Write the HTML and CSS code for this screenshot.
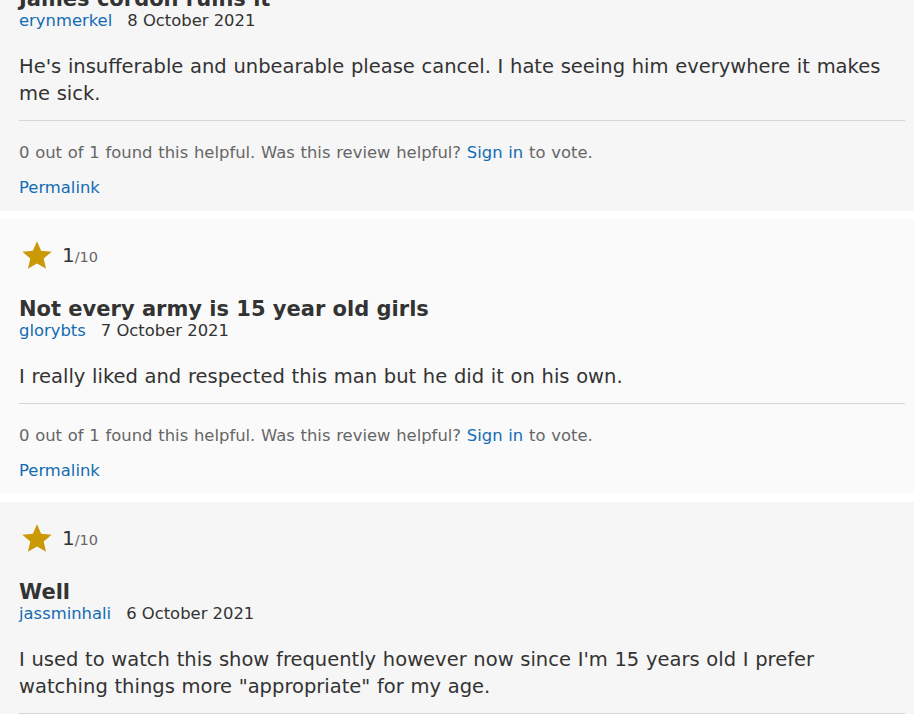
FILE: index.html
```html
<!DOCTYPE html>
<html lang="en">
<head>
<meta charset="utf-8">
<title>User reviews</title>
<link rel="stylesheet" href="styles.css">
</head>
<body>
<div class="list">
  <div class="review review--odd">
    <div class="rating">
      <svg class="star" viewBox="0 0 24 24" aria-hidden="true"><path d="M12 1.6l3.1 7.3 7.9.6-6 5.2 1.8 7.7L12 18.3l-6.8 4.1 1.8-7.7-6-5.2 7.9-.6z"/></svg>
      <span class="score">1</span><span class="outof">/10</span>
    </div>
    <div class="title">James cordon ruins it</div>
    <div class="meta"><a class="author" href="#">erynmerkel</a><span class="date">8 October 2021</span></div>
    <div class="text">He's insufferable and unbearable please cancel. I hate seeing him everywhere it makes me sick.</div>
    <div class="actions">
      <div class="helpful">0 out of 1 found this helpful. Was this review helpful? <a href="#">Sign in</a> to vote.</div>
      <a class="permalink" href="#">Permalink</a>
    </div>
  </div>
  <div class="review review--even">
    <div class="rating">
      <svg class="star" viewBox="0 0 24 24" aria-hidden="true"><path d="M12 1.6l3.1 7.3 7.9.6-6 5.2 1.8 7.7L12 18.3l-6.8 4.1 1.8-7.7-6-5.2 7.9-.6z"/></svg>
      <span class="score">1</span><span class="outof">/10</span>
    </div>
    <div class="title">Not every army is 15 year old girls</div>
    <div class="meta"><a class="author" href="#">glorybts</a><span class="date">7 October 2021</span></div>
    <div class="text">I really liked and respected this man but he did it on his own.</div>
    <div class="actions">
      <div class="helpful">0 out of 1 found this helpful. Was this review helpful? <a href="#">Sign in</a> to vote.</div>
      <a class="permalink" href="#">Permalink</a>
    </div>
  </div>
  <div class="review review--odd">
    <div class="rating">
      <svg class="star" viewBox="0 0 24 24" aria-hidden="true"><path d="M12 1.6l3.1 7.3 7.9.6-6 5.2 1.8 7.7L12 18.3l-6.8 4.1 1.8-7.7-6-5.2 7.9-.6z"/></svg>
      <span class="score">1</span><span class="outof">/10</span>
    </div>
    <div class="title">Well</div>
    <div class="meta"><a class="author" href="#">jassminhali</a><span class="date">6 October 2021</span></div>
    <div class="text">I used to watch this show frequently however now since I'm 15 years old I prefer watching things more "appropriate" for my age.</div>
    <div class="actions">
      <div class="helpful">0 out of 1 found this helpful. Was this review helpful? <a href="#">Sign in</a> to vote.</div>
      <a class="permalink" href="#">Permalink</a>
    </div>
  </div>
</div>
</body>
</html>
```

FILE: styles.css
```css
html, body {
  margin: 0;
  padding: 0;
  background: #ffffff;
}
body {
  font-family: "DejaVu Sans", Verdana, sans-serif;
  color: #333333;
  overflow: hidden;
}
a {
  color: #136cb2;
  text-decoration: none;
}
.list {
  display: flex;
  flex-direction: column;
  gap: 8px;
  margin-top: -91px;
}
.review {
  padding: 21px 9px 13px 19px;
}
.review--odd {
  background: #f6f6f6;
}
.review--even {
  background: #fafafa;
}
.rating {
  display: flex;
  align-items: center;
  height: 30px;
}
.star {
  width: 32px;
  height: 32px;
  fill: #c99906;
  margin-left: 2px;
  margin-right: 9px;
}
.score {
  font-size: 20px;
  line-height: 24px;
}
.outof {
  font-size: 14.5px;
  color: #666666;
  line-height: 24px;
  margin-top: 3px;
}
.title {
  margin-top: 27px;
  font-size: 21px;
  font-weight: bold;
  line-height: 24px;
}
.meta {
  font-size: 16.4px;
  line-height: 20px;
}
.author {
  margin-right: 15px;
}
.text {
  margin-top: 22px;
  font-size: 19.5px;
  word-spacing: 0.5px;
  line-height: 27px;
  padding-bottom: 13px;
  border-bottom: 1px solid #d6d6d6;
}
.actions {
  display: flex;
  flex-direction: column;
  align-items: flex-start;
  gap: 15px;
  padding-top: 22px;
  font-size: 16.4px;
  word-spacing: 0.55px;
  line-height: 20px;
}
.helpful {
  color: #666666;
}
```
